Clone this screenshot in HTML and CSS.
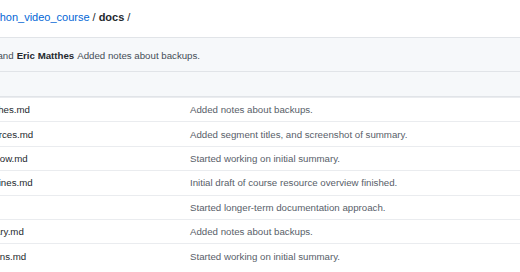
FILE: index.html
```html
<!DOCTYPE html>
<html>
<head>
<meta charset="utf-8">
<link rel="stylesheet" href="styles.css">
</head>
<body>
<div class="page">
  <nav class="crumb">
    <a class="repo" href="#">python_video_course</a>
    <span class="sep">/</span>
    <strong class="dir">docs</strong>
    <span class="sep">/</span>
  </nav>
  <div class="box">
    <div class="commit">
      <strong class="user">ehmatthes</strong>
      <span class="and">and</span>
      <strong class="user">Eric Matthes</strong>
      <span class="msg">Added notes about backups.</span>
    </div>
    <div class="sub"></div>
    <div class="row"><span class="name">web_approaches.md</span><span class="message">Added notes about backups.</span></div>
    <div class="row"><span class="name">course_resources.md</span><span class="message">Added segment titles, and screenshot of summary.</span></div>
    <div class="row"><span class="name">course_workflow.md</span><span class="message">Started working on initial summary.</span></div>
    <div class="row"><span class="name">resource_outlines.md</span><span class="message">Initial draft of course resource overview finished.</span></div>
    <div class="row"><span class="name">notes.md</span><span class="message">Started longer-term documentation approach.</span></div>
    <div class="row"><span class="name">video_summary.md</span><span class="message">Added notes about backups.</span></div>
    <div class="row"><span class="name">course_sections.md</span><span class="message">Started working on initial summary.</span></div>
  </div>
</div>
</body>
</html>
```
FILE: styles.css
```css
html, body {
  margin: 0;
  padding: 0;
  background: #ffffff;
  overflow: hidden;
}
body {
  font-family: "Liberation Sans", Arial, sans-serif;
  color: #24292e;
}
.page {
  width: 700px;
  margin-left: -60px;
}
.crumb {
  height: 37px;
  box-sizing: border-box;
  padding-bottom: 4px;
  display: flex;
  align-items: center;
  gap: 3px;
  padding-left: 45px;
  font-size: 11px;
}
.repo {
  color: #0366d6;
  text-decoration: none;
}
.dir {
  font-weight: bold;
  color: #24292e;
}
.sep {
  color: #24292e;
}
.box {
  border-top: 1px solid #e1e4e8;
}
.commit {
  height: 34px;
  box-sizing: border-box;
  background: #f6f8fa;
  border-bottom: 1px solid #e1e4e8;
  display: flex;
  align-items: center;
  gap: 3px;
  padding-left: 6px;
  padding-top: 1px;
  font-size: 9.7px;
  color: #444d56;
}
.user {
  color: #24292e;
  font-weight: bold;
}
.sub {
  height: 25px;
  box-sizing: border-box;
  background: #f6f8fa;
  border-bottom: 1px solid #e1e4e8;
}
.row {
  height: 24.4px;
  box-sizing: border-box;
  border-top: 1px solid #eaecef;
  display: grid;
  grid-template-columns: 250px 1fr;
  align-items: center;
  font-size: 9.7px;
}
.row:first-of-type {
  border-top: none;
}
.name {
  color: #24292e;
  white-space: nowrap;
}
.message {
  color: #586069;
  white-space: nowrap;
}
```
